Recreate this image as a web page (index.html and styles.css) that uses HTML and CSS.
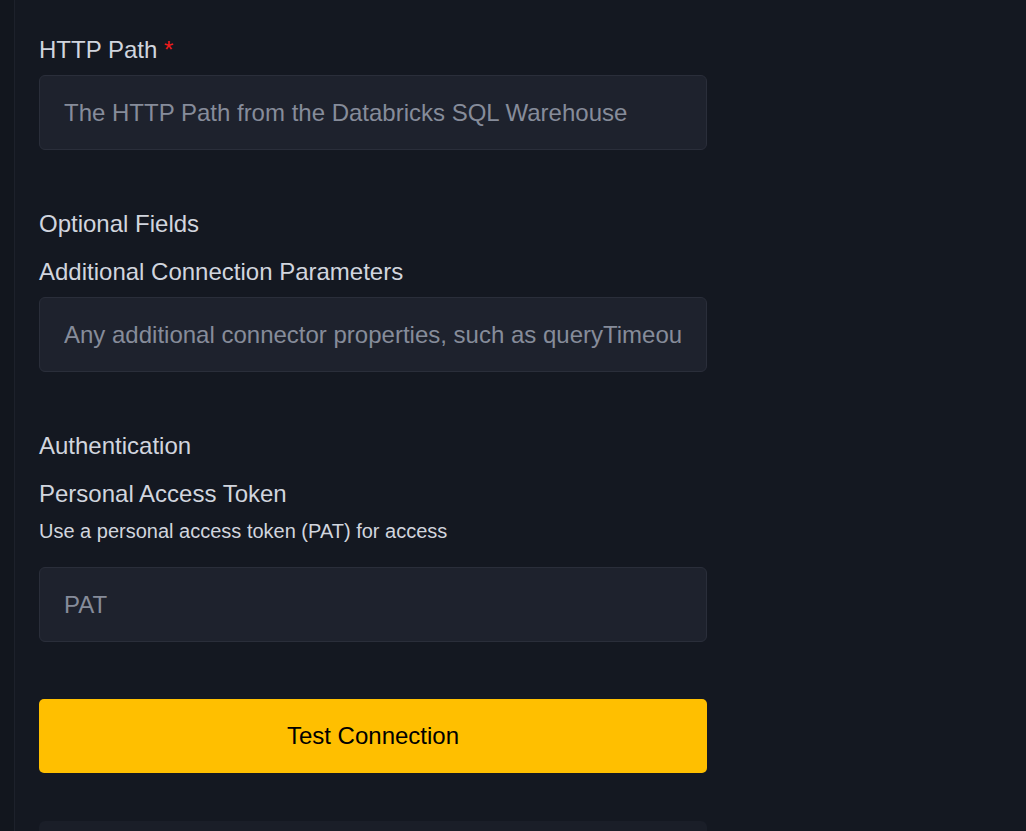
FILE: index.html
```html
<!DOCTYPE html>
<html lang="en">
<head>
    <meta charset="UTF-8">
    <meta name="viewport" content="width=device-width, initial-scale=1.0">
    <title>Databricks Connection</title>
    <link rel="stylesheet" href="styles.css">
</head>
<body>
    <div class="layout">
        <aside class="rail"></aside>
        <main class="main">
            <form class="conn-form">
                <div class="field">
                    <label class="field-label" for="httpPath">HTTP Path <span class="required">*</span></label>
                    <input class="text-input" id="httpPath" type="text" placeholder="The HTTP Path from the Databricks SQL Warehouse">
                </div>

                <div class="section">
                    <div class="section-title">Optional Fields</div>
                    <div class="field">
                        <label class="field-label" for="extraParams">Additional Connection Parameters</label>
                        <input class="text-input" id="extraParams" type="text" placeholder="Any additional connector properties, such as queryTimeout">
                    </div>
                </div>

                <div class="section">
                    <div class="section-title">Authentication</div>
                    <div class="field">
                        <label class="field-label" for="pat">Personal Access Token</label>
                        <div class="field-hint">Use a personal access token (PAT) for access</div>
                        <input class="text-input" id="pat" type="password" placeholder="PAT">
                    </div>
                </div>

                <button class="test-button" type="button">Test Connection</button>

                <div class="result-box"></div>
            </form>
        </main>
    </div>
</body>
</html>
```

FILE: styles.css
```css
* {
    margin: 0;
    padding: 0;
    box-sizing: border-box;
    font-family: "Liberation Sans", Arial, sans-serif;
}

html, body {
    height: 100%;
    overflow: hidden;
}

body {
    background: #141821;
    color: #d1d5de;
}

.layout {
    display: flex;
    min-height: 100%;
}

.rail {
    width: 15px;
    flex-shrink: 0;
    background: #12161e;
    border-right: 1px solid #1d212b;
}

.main {
    flex: 1;
    padding: 36px 24px 0;
}

.conn-form {
    width: 668px;
    display: flex;
    flex-direction: column;
}

.section {
    margin-top: 60px;
}

.section-title {
    font-size: 24px;
    line-height: 28px;
    color: #d1d5de;
    margin-bottom: 20px;
}

.field {
    display: flex;
    flex-direction: column;
}

.field-label {
    font-size: 24px;
    line-height: 28px;
    color: #d1d5de;
    margin-bottom: 11px;
}

.required {
    color: #f01c1c;
}

.field-hint {
    font-size: 20px;
    line-height: 24px;
    color: #d1d5de;
    margin-bottom: 24px;
}

.text-input {
    height: 75px;
    width: 100%;
    padding: 0 24px;
    background: #1e222d;
    border: 1px solid #2a2e3a;
    border-radius: 6px;
    color: #d1d5de;
    font-size: 24px;
    outline: none;
}

.text-input::placeholder {
    color: #868c9a;
}

.test-button {
    margin-top: 57px;
    height: 74px;
    width: 100%;
    background: #ffbf00;
    border: none;
    border-radius: 5px;
    color: #000;
    font-size: 24px;
    cursor: pointer;
}

.result-box {
    margin-top: 48px;
    height: 80px;
    background: #1a1e28;
    border-radius: 6px;
}
```
